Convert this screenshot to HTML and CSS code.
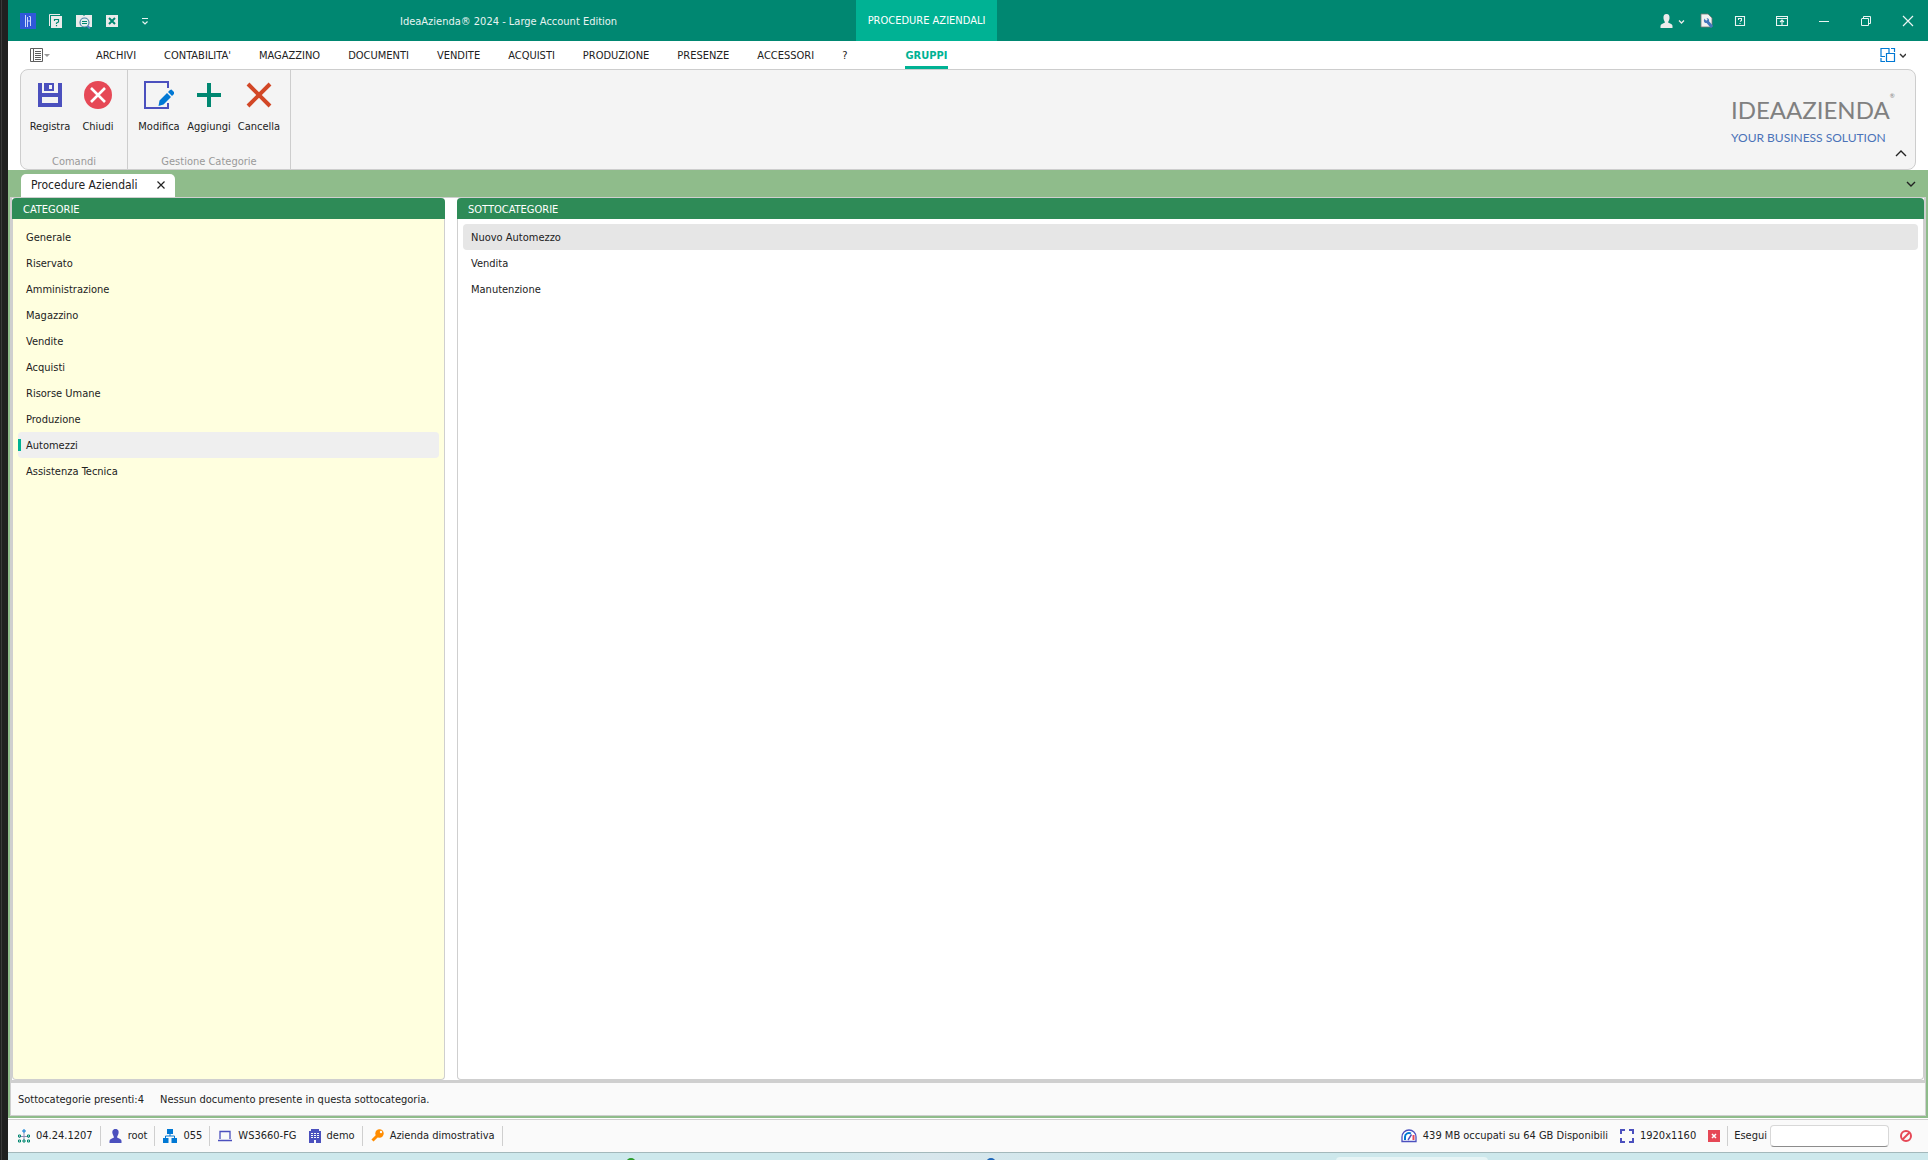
FILE: index.html
```html
<!DOCTYPE html>
<html lang="it">
<head>
<meta charset="utf-8">
<title>IdeaAzienda® 2024 - Large Account Edition</title>
<link rel="stylesheet" href="styles.css">
</head>
<body>
<div class="backdrop"></div>
<div class="window">
  <header class="titlebar">
    <div class="titlebar-left">
      <div class="quick-access">
        <button class="tool" aria-label="IdeaAzienda"><svg width="16" height="16" viewBox="0 0 16 16"><rect width="16" height="16" fill="#3058d8"/><path d="M5.500 2v12M7.500 14V4M10.500 13V4Q10 2 9 4M8 8H10.500" fill="none" stroke="#dfe6ff" stroke-width=".9"/></svg></button>
        <button class="tool" aria-label="Guida rapida"><svg width="16" height="16" viewBox="0 0 16 16"><path d="M1.500 13V1.500H12" fill="none" stroke="#ebebeb"/><path d="M3 3H14V15H3Z" fill="#ebebeb"/><path d="M6.500 8V6.500H10.500V9L8.500 10V11M8.500 12v1.200" fill="none" stroke="#008771" stroke-width="1.200"/></svg></button>
        <button class="tool" aria-label="Cerca"><svg width="16" height="16" viewBox="0 0 16 16"><path d="M0 2H7L8 3L9 2H16V14H0Z" fill="#ebebeb"/><circle cx="8.500" cy="9.500" r="4.500" fill="#e4f1ee" stroke="#4b86a8" stroke-width="1.200"/><path d="M6 8.500H11M6 10.500H11" stroke="#008771"/><path d="M11.500 13L14 15.500" stroke="#4b7fc0" stroke-width="2"/></svg></button>
        <button class="tool" aria-label="Chiudi scheda"><svg width="16" height="16" viewBox="0 0 16 16"><rect x="2" y="2" width="12" height="12" fill="#ebebeb"/><path d="M5 5L11 11M11 5L5 11" stroke="#008771" stroke-width="2"/></svg></button>
        <button class="tool" aria-label="Personalizza"><svg width="16" height="16" viewBox="0 0 16 16"><path d="M5 5.500H11M5.500 8.500L8 11L10.500 8.500" fill="none" stroke="#e8f4f1" stroke-width="1.200"/></svg></button>
      </div>
      <h1 class="app-title">IdeaAzienda® 2024 - Large Account Edition</h1>
    </div>
    <div class="context-tab">PROCEDURE AZIENDALI</div>
    <div class="window-tools">
      <button class="tool user-tool" aria-label="Utente"><svg width="26" height="16" viewBox="0 0 26 16"><path d="M6.500 1C9 1 9.800 3 9.500 5.500C9.200 7.500 8 9 8 9.500C10 10.500 12.500 11 12.500 13V15H.5V13C.5 11 3 10.500 5 9.500C5 9 3.800 7.500 3.500 5.500C3.200 3 4 1 6.500 1Z" fill="#ebebeb"/><path d="M19 7.500L21.500 10L24 7.500" fill="none" stroke="#ebebeb" stroke-width="1.300"/></svg></button>
      <button class="tool doc-tool" aria-label="Impostazioni"><svg width="14" height="16" viewBox="0 0 14 16"><path d="M1 1H8L12 5V14H1Z" fill="#f2f2f2" stroke="#777" stroke-width=".8"/><path d="M6 7L12 14" stroke="#4478bd" stroke-width="3"/><circle cx="6.500" cy="7.500" r="2.600" fill="#4478bd"/><path d="M5 5L7 7" stroke="#f2f2f2" stroke-width="2"/></svg></button>
      <button class="tool" aria-label="Aiuto"><svg width="12" height="12" viewBox="0 0 12 12"><path d="M1.500 1.500H10.500V10.500H1.500ZM4.500 5V3.500H7.500V5.500L6 6.500M6 8v1" fill="none" stroke="#ebf5f3" stroke-width="1.100"/></svg></button>
      <button class="tool" aria-label="Opzioni barra"><svg width="12" height="12" viewBox="0 0 12 12"><path d="M.5 1.500H11.500V10.500H.5ZM.5 3.500H11.500M6 10V5M4 7L6 5L8 7" fill="none" stroke="#ebf5f3" stroke-width="1.100"/></svg></button>
      <button class="tool" aria-label="Riduci a icona"><svg width="12" height="12" viewBox="0 0 12 12"><path d="M1 6.500H11" stroke="#ebf5f3"/></svg></button>
      <button class="tool" aria-label="Ripristina"><svg width="12" height="12" viewBox="0 0 12 12"><path d="M1.500 4V10.500H8.500V3.500H1.500M3.500 3V1.500H10.500V8.500H9" fill="none" stroke="#ebf5f3"/></svg></button>
      <button class="tool" aria-label="Chiudi finestra"><svg width="12" height="12" viewBox="0 0 12 12"><path d="M1 1L11 11M11 1L1 11" stroke="#ebf5f3" stroke-width="1.200"/></svg></button>
    </div>
  </header>

  <nav class="menu" aria-label="Menu principale">
    <button class="menu-file" aria-label="File"><svg width="22" height="16" viewBox="0 0 22 16"><path d="M.5 1.500H12.500V14.500H.5ZM3.500 1V15M5 4.500H11M5 6.500H11M5 8.500H11M5 10.500H11M5 12.500H11" fill="none" stroke="#5e5e5e"/><path d="M14 7H20L17 10Z" fill="#9a9a9a"/></svg></button>
    <a class="menu-tab" href="#">ARCHIVI</a>
    <a class="menu-tab" href="#">CONTABILITA'</a>
    <a class="menu-tab" href="#">MAGAZZINO</a>
    <a class="menu-tab" href="#">DOCUMENTI</a>
    <a class="menu-tab" href="#">VENDITE</a>
    <a class="menu-tab" href="#">ACQUISTI</a>
    <a class="menu-tab" href="#">PRODUZIONE</a>
    <a class="menu-tab" href="#">PRESENZE</a>
    <a class="menu-tab" href="#">ACCESSORI</a>
    <a class="menu-tab" href="#">?</a>
    <a class="menu-tab menu-tab-active" href="#">GRUPPI</a>
    <button class="menu-layout" aria-label="Disposizione finestre"><svg width="26" height="16" viewBox="0 0 26 16"><path d="M1 8V1.500H9V6M5 9.500H1V8M11 1.500H14.500V5M1 11V14.500H5M6.500 6.500H14.500V14.500H6.500Z" fill="none" stroke="#0078d4" stroke-width="1.200"/><path d="M20 7L23 10L26 7" fill="none" stroke="#333" stroke-width="1.400"/></svg></button>
  </nav>

  <section class="ribbon">
    <div class="ribbon-group">
      <div class="ribbon-buttons">
        <button class="ribbon-button"><svg width="28" height="28" viewBox="0 0 28 28"><path d="M2 2H6V12H22V2H26V26H2Z" fill="#4b50be"/><path d="M8 2H18V10H8Z" fill="#4b50be"/><path d="M13 4H16V8H13Z" fill="#f4f4f4"/><path d="M6 16H22V22H6Z" fill="#f4f4f4"/></svg>Registra</button>
        <button class="ribbon-button"><svg width="28" height="28" viewBox="0 0 28 28"><circle cx="14" cy="14" r="14" fill="#e64856"/><path d="M7 7L21 21M21 7L7 21" stroke="#fff" stroke-width="2.600"/></svg>Chiudi</button>
      </div>
      <div class="ribbon-caption">Comandi</div>
    </div>
    <div class="ribbon-group ribbon-group-wide">
      <div class="ribbon-buttons">
        <button class="ribbon-button"><svg width="30" height="28" viewBox="0 0 30 28"><path d="M24 7V1H1V27H24V22" fill="none" stroke="#4b50be" stroke-width="2"/><path d="M14.500 25L15.500 19.500L23 12L27 16L19.500 23.500ZM24 11L26 9L27.500 8.500L30 11L30 13L28 15Z" fill="#0078d4"/></svg>Modifica</button>
        <button class="ribbon-button"><svg width="28" height="28" viewBox="0 0 28 28"><path d="M14 2V26M2 14H26" stroke="#008771" stroke-width="4"/></svg>Aggiungi</button>
        <button class="ribbon-button"><svg width="28" height="28" viewBox="0 0 28 28"><path d="M3 3L25 25M25 3L3 25" stroke="#d24726" stroke-width="4"/></svg>Cancella</button>
      </div>
      <div class="ribbon-caption">Gestione Categorie</div>
    </div>
    <div class="brand">
      <div class="brand-name">IDEAAZIENDA<sup class="brand-mark">®</sup></div>
      <div class="brand-slogan">YOUR BUSINESS SOLUTION</div>
    </div>
    <button class="ribbon-collapse" aria-label="Riduci barra"><svg width="12" height="8" viewBox="0 0 12 8"><path d="M1 7L6 2L11 7" fill="none" stroke="#222" stroke-width="1.400"/></svg></button>
  </section>

  <div class="doc-tabs">
    <div class="doc-tab"><span>Procedure Aziendali</span><button class="doc-close" aria-label="Chiudi"><svg width="8" height="8" viewBox="0 0 8 8"><path d="M.5 .5L7.500 7.500M7.500 .5L.5 7.500" stroke="#222" stroke-width="1.200"/></svg></button></div>
    <button class="doc-list" aria-label="Elenco schede"><svg width="10" height="8" viewBox="0 0 10 8"><path d="M1 2L5 6L9 2" fill="none" stroke="#222" stroke-width="1.400"/></svg></button>
  </div>

  <main class="workspace">
    <div class="panels">
      <section class="panel panel-categories">
        <h2 class="panel-title">CATEGORIE</h2>
        <ul class="list">
          <li class="row">Generale</li>
          <li class="row">Riservato</li>
          <li class="row">Amministrazione</li>
          <li class="row">Magazzino</li>
          <li class="row">Vendite</li>
          <li class="row">Acquisti</li>
          <li class="row">Risorse Umane</li>
          <li class="row">Produzione</li>
          <li class="row row-current">Automezzi</li>
          <li class="row">Assistenza Tecnica</li>
        </ul>
      </section>
      <section class="panel panel-subcategories">
        <h2 class="panel-title">SOTTOCATEGORIE</h2>
        <ul class="list">
          <li class="row row-hover">Nuovo Automezzo</li>
          <li class="row">Vendita</li>
          <li class="row">Manutenzione</li>
        </ul>
      </section>
    </div>
    <div class="summary"><span>Sottocategorie presenti:4</span><span>Nessun documento presente in questa sottocategoria.</span></div>
  </main>

  <footer class="statusbar">
    <div class="status-item"><svg width="12" height="14" viewBox="0 0 12 14"><path d="M6 3.500V12M1.500 9V7.500H10.500V9" fill="none" stroke="#8c8cb4"/><path d="M5 1h2v2h-2z" fill="#fafafa" stroke="#0078d4"/><path d="M.5 6h2v2h-2zM9.500 6h2v2h-2zM.5 11h2v2h-2zM5 11h2v2h-2zM9.500 11h2v2h-2z" fill="#fafafa" stroke="#008771"/></svg>04.24.1207</div>
    <div class="status-item"><svg width="13" height="14" viewBox="0 0 13 14"><path d="M6.500 0C9.500 0 10 2.500 9.500 4.500C9.200 6 8 7.500 8 8.500C10 9.500 12.500 10 12.500 12V14H.5V12C.5 10 3 9.500 5 8.500C5 7.500 3.800 6 3.500 4.500C3 2.500 3.500 0 6.500 0Z" fill="#4b50be"/></svg>root</div>
    <div class="status-item"><svg width="14" height="14" viewBox="0 0 14 14"><path d="M4 0H10V5H4ZM0 9H5.500V14H0ZM8.500 9H14V14H8.500Z" fill="#0078d4"/><path d="M7 5V7M2.500 9V7H11.500V9" fill="none" stroke="#0078d4"/></svg>055</div>
    <div class="status-item status-item-open"><svg width="14" height="14" viewBox="0 0 14 14"><path d="M2 10V2.500H12V10M0 11.500H14" fill="none" stroke="#4b50be" stroke-width="1.300"/></svg>WS3660-FG</div>
    <div class="status-item"><svg width="12" height="14" viewBox="0 0 12 14"><path d="M2 0H10V2H12V14H7V11H5V14H0V2H2Z" fill="#4b50be"/><path d="M2 4.500H10M2 6.500H10M2 8.500H10" stroke="#fafafa" stroke-dasharray="2 1"/></svg>demo</div>
    <div class="status-item"><svg width="13" height="14" viewBox="0 0 13 14"><circle cx="8.500" cy="4.500" r="4.200" fill="#ff8c00"/><path d="M6.500 6.500L1.500 11.500" stroke="#ff8c00" stroke-width="3"/><circle cx="10" cy="3" r="1.200" fill="#fafafa"/></svg>Azienda dimostrativa</div>
    <div class="status-item status-item-open status-memory"><svg width="16" height="14" viewBox="0 0 16 14"><path d="M1 12.500V8A7 7 0 0 1 15 8V12.500Z" fill="#fff" stroke="#4b50be" stroke-width="1.300"/><path d="M4 11V8A4 4 0 0 1 10 4.500" fill="none" stroke="#0078d4" stroke-width="2"/><path d="M12.500 6V11" stroke="#e64856" stroke-width="2"/><path d="M7 11L10.500 5.500" stroke="#4b50be" stroke-width="1.400"/></svg>439 MB occupati su 64 GB Disponibili</div>
    <div class="status-item status-item-open"><svg width="14" height="14" viewBox="0 0 14 14"><path d="M1 5V1H5M9 1H13V5M13 9V13H9M5 13H1V9" fill="none" stroke="#4b50be" stroke-width="2"/></svg>1920x1160</div>
    <div class="status-item"><svg width="12" height="12" viewBox="0 0 12 12"><rect width="12" height="12" fill="#e64856"/><path d="M4 4L8 8M8 4L4 8" stroke="#fff" stroke-width="1.500"/></svg></div>
    <div class="status-run"><label for="run">Esegui</label><input id="run" class="run-input" type="text"></div>
    <button class="tool stop" aria-label="Interrompi"><svg width="12" height="12" viewBox="0 0 12 12"><path d="M2.500 9.500L9.500 2.500" stroke="#e64856" stroke-width="2"/><circle cx="6" cy="6" r="5" fill="none" stroke="#e64856" stroke-width="2"/></svg></button>
  </footer>
  <div class="taskbar"><span class="task-dot task-dot-green"></span><span class="task-dot task-dot-blue"></span><span class="task-search"></span></div>
</div>
</body>
</html>
```
FILE: styles.css
```css
* { box-sizing: border-box; }

body {
  margin: 0;
  display: flex;
  min-height: 100vh;
  background: #fff;
  color: #222;
  font: 11px/16px "DejaVu Sans Condensed", "DejaVu Sans", sans-serif;
}

button, input { font: inherit; color: inherit; }
button { border: 0; padding: 0; background: none; }
svg { display: block; flex: none; }
h1, h2, ul { margin: 0; padding: 0; font-size: 11px; font-weight: 400; }
ul { list-style: none; }

.backdrop {
  flex: none;
  width: 8px;
  background: linear-gradient(90deg, #202020 1px, #3a3a3a 1px 2px, #202020 2px);
}

.window {
  flex: 1;
  min-width: 0;
  display: flex;
  flex-direction: column;
}

/* Title bar */
.titlebar {
  display: flex;
  height: 41px;
  background: #008771;
  color: #e8f4f1;
}
.titlebar-left {
  flex: none;
  width: 848px;
  display: flex;
  align-items: center;
}
.quick-access {
  display: flex;
  gap: 12px;
  padding-left: 12px;
  width: 260px;
}
.quick-access .tool:last-child { margin-left: 5px; }
.app-title { flex: 1; padding-left: 132px; line-height: 41px; padding-top: 1px; }
.context-tab {
  flex: none;
  width: 141px;
  background: #00b294;
  color: #fff;
  text-align: center;
  line-height: 41px;
}
.window-tools {
  margin-left: auto;
  display: flex;
  align-items: center;
  gap: 30px;
  padding-right: 14px;
}
.user-tool { margin-right: -16px; }
.doc-tool { margin-right: -10px; }

/* Menu */
.menu {
  display: flex;
  align-items: stretch;
  height: 28px;
  padding: 0 12px 0 22px;
}
.menu-file { width: 52px; }
.menu-tab {
  padding: 0 14px;
  color: #222;
  text-decoration: none;
  line-height: 30px;
  white-space: nowrap;
}
.menu-tab-active {
  margin-left: 30px;
  color: #00b294;
  font-weight: 700;
  background: linear-gradient(#00b294, #00b294) center bottom / 43px 3px no-repeat;
}
.menu-layout { margin-left: auto; padding-right: 10px; }

/* Ribbon */
.ribbon {
  display: flex;
  height: 101px;
  margin: 0 12px;
  border: 1px solid #cdcdcd;
  border-radius: 8px;
  background: #f4f4f4;
}
.ribbon-group {
  width: 107px;
  padding-top: 11px;
  border-right: 1px solid #cdcdcd;
  display: flex;
  flex-direction: column;
  justify-content: space-between;
}
.ribbon-group-wide { width: 163px; }
.ribbon-buttons { display: flex; justify-content: center; }
.ribbon-button {
  width: 48px;
  display: flex;
  flex-direction: column;
  align-items: center;
  gap: 10px;
}
.ribbon-group-wide .ribbon-button { width: 50px; }
.ribbon-caption { text-align: center; color: #999; line-height: 14px; }
.brand {
  margin: 20px 4px 0 auto;
  width: 160px;
  font-family: "Lato", sans-serif;
  white-space: nowrap;
}
.brand-name { font-size: 24px; line-height: 40px; color: #808080; }
.brand-mark { font-size: 6px; line-height: 12px; vertical-align: top; }
.brand-slogan { font-size: 12px; line-height: 16px; color: #4a72b8; }
.ribbon-collapse { align-self: flex-end; margin: 0 8px 12px 0; }

/* Document tabs */
.doc-tabs {
  display: flex;
  justify-content: space-between;
  height: 27px;
  padding: 4px 12px 0 13px;
  background: #8fbc8b;
}
.doc-tab {
  width: 154px;
  padding: 0 10px 2px;
  display: flex;
  justify-content: space-between;
  align-items: center;
  border-radius: 5px 5px 0 0;
  background: #fff;
  font-size: 12px;
}
.doc-list { padding-bottom: 4px; }

/* Workspace */
.workspace {
  flex: 1;
  display: flex;
  flex-direction: column;
  margin-bottom: 1px;
  border: solid #8fbc8b;
  border-width: 0 2px 2px;
}
.panels {
  flex: 1;
  display: flex;
  gap: 12px;
  border: solid #cfcfcf;
  border-width: 1px 2px 3px;
}
.panel {
  display: flex;
  flex-direction: column;
  border: 1px solid #cfcfcf;
  border-top: 0;
  border-radius: 4px;
}
.panel-categories { flex: 0 0 433px; background: #ffffdf; }
.panel-subcategories { flex: 1; background: #fff; }
.panel-title {
  height: 21px;
  margin: 0 -1px;
  padding-left: 11px;
  border-radius: 4px 4px 0 0;
  background: #2e8b57;
  color: #fff;
  line-height: 23px;
}
.list { padding: 5px; }
.row {
  height: 26px;
  padding-left: 8px;
  border-radius: 4px;
  line-height: 28px;
}
.row-hover { background: #e6e6e6; }
.row-current { background: linear-gradient(#00b294, #00b294) left center / 3px 12px no-repeat #efefef; }
.summary {
  display: flex;
  gap: 16px;
  height: 33px;
  padding-left: 7px;
  border: solid #cfcfcf;
  border-width: 0 1px 1px;
  background: #fafafa;
  line-height: 34px;
}

/* Status bar */
.statusbar {
  display: flex;
  align-items: center;
  height: 33px;
  padding: 0 16px 0 2px;
  border-top: 1px solid #cfcfcf;
  background: #fafafa;
}
.status-item {
  height: 20px;
  display: flex;
  align-items: center;
  gap: 6px;
  padding: 0 7px 0 8px;
  border-right: 1px solid #cfcfcf;
  white-space: nowrap;
}
.status-item-open { border-right: 0; padding-right: 4px; }
.status-memory { margin-left: auto; }
.status-run {
  display: flex;
  align-items: center;
  gap: 3px;
  padding-left: 6px;
}
.run-input {
  width: 119px;
  height: 22px;
  padding: 0 4px;
  border: 1px solid #d8d8d8;
  border-bottom-color: #8c8c8c;
  border-radius: 4px;
  background: #fff;
}
.stop { margin-left: 11px; }

/* Strip of the desktop task bar */
.taskbar {
  position: relative;
  height: 8px;
  overflow: hidden;
  border-top: 1px solid #a3b8bb;
  background: linear-gradient(90deg, #cde8ec 42%, #d8e6ec 48%, #cde8ec 60%);
}
.task-dot {
  position: absolute;
  top: 5px;
  width: 10px;
  height: 10px;
  border-radius: 5px;
}
.task-dot-green { left: 618px; background: #2c9c2c; }
.task-dot-blue { left: 978px; background: #1f66b8; }
.task-search {
  position: absolute;
  top: 4px;
  left: 1328px;
  width: 152px;
  height: 20px;
  border-radius: 4px;
  background: #e6f4f5;
}
```
